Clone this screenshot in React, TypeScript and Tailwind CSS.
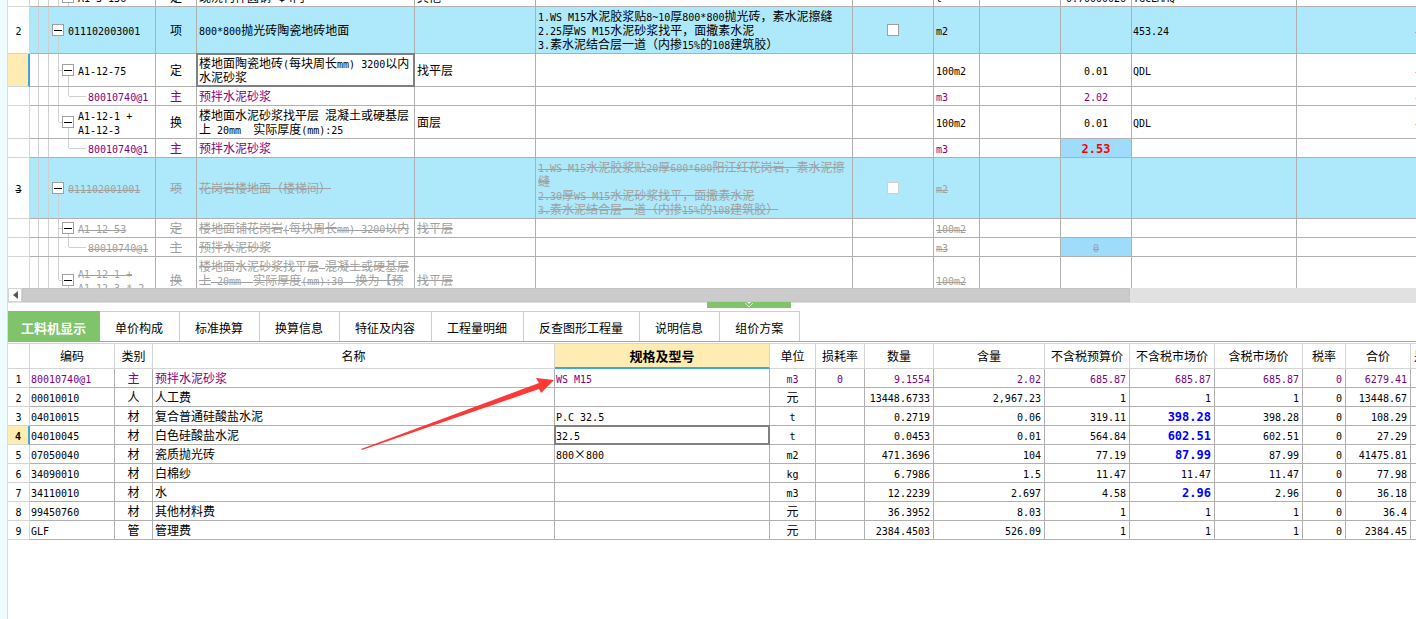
import { useState } from "react";
import type { ReactNode } from "react";
import clsx from "clsx";

type Kind = "item" | "norm" | "main";

interface BillRow {
  no?: string;
  level: 1 | 2 | 3;
  code: string;
  type: string;
  name: string;
  spec?: string;
  feature?: string;
  unit: string;
  content?: string;
  expr?: string;
  kind: Kind;
  height: string;
  last?: boolean;
  deleted?: boolean;
  changed?: boolean;
  selected?: boolean;
  check?: boolean;
  tail?: boolean;
}

const BILL: BillRow[] = [
  { level: 2, code: "A1-3-136", type: "定", name: "现浇构件圆钢 Φ4内", spec: "其他", unit: "t", content: "0.70000026", expr: "YGCLMMQ", kind: "norm", height: "h-[19px]" },
  { no: "2", level: 1, code: "011102003001", type: "项", name: "800*800抛光砖陶瓷地砖地面", feature: "1.WS M15水泥胶浆贴8~10厚800*800抛光砖，素水泥擦缝\n2.25厚WS M15水泥砂浆找平，面撒素水泥\n3.素水泥结合层一道（内掺15%的108建筑胶）", unit: "m2", expr: "453.24", kind: "item", height: "h-[47px]", check: true, tail: true },
  { level: 2, code: "A1-12-75", type: "定", name: "楼地面陶瓷地砖(每块周长mm) 3200以内\n水泥砂浆", spec: "找平层", unit: "100m2", content: "0.01", expr: "QDL", kind: "norm", height: "h-[33px]", selected: true, tail: true },
  { level: 3, code: "80010740@1", type: "主", name: "预拌水泥砂浆", unit: "m3", content: "2.02", kind: "main", height: "h-[19px]", tail: true },
  { level: 2, code: "A1-12-1 +\nA1-12-3", type: "换", name: "楼地面水泥砂浆找平层 混凝土或硬基层\n上 20mm  实际厚度(mm):25", spec: "面层", unit: "100m2", content: "0.01", expr: "QDL", kind: "norm", height: "h-[33px]", last: true, tail: true },
  { level: 3, code: "80010740@1", type: "主", name: "预拌水泥砂浆", unit: "m3", content: "2.53", kind: "main", height: "h-[19px]", last: true, changed: true },
  { no: "3", level: 1, code: "011102001001", type: "项", name: "花岗岩楼地面（楼梯间）", feature: "1.WS M15水泥胶浆贴20厚600*600阳江红花岗岩，素水泥擦\n缝\n2.30厚WS M15水泥砂浆找平，面撒素水泥\n3.素水泥结合层一道（内掺15%的108建筑胶）", unit: "m2", kind: "item", height: "h-[61px]", deleted: true, check: true },
  { level: 2, code: "A1-12-53", type: "定", name: "楼地面铺花岗岩(每块周长mm) 3200以内", spec: "找平层", unit: "100m2", kind: "norm", height: "h-[19px]", deleted: true },
  { level: 3, code: "80010740@1", type: "主", name: "预拌水泥砂浆", unit: "m3", content: "0", kind: "main", height: "h-[19px]", deleted: true, changed: true },
  { level: 2, code: "A1-12-1 +\nA1-12-3 * 2", type: "换", name: "楼地面水泥砂浆找平层 混凝土或硬基层\n上 20mm  实际厚度(mm):30  换为【预\n拌水泥砂浆】", spec: "找平层", unit: "100m2", kind: "norm", height: "h-[47px]", last: true, deleted: true },
];

const TABS = ["工料机显示", "单价构成", "标准换算", "换算信息", "特征及内容", "工程量明细", "反查图形工程量", "说明信息", "组价方案"];

const HEADS = ["", "编码", "类别", "名称", "规格及型号", "单位", "损耗率", "数量", "含量", "不含税预算价", "不含税市场价", "含税市场价", "税率", "合价", "是"];

// code, type, name, spec, unit, loss, qty, content, budget, market, taxed market, rate, total
const MATERIALS = [
  ["80010740@1", "主", "预拌水泥砂浆", "WS M15", "m3", "0", "9.1554", "2.02", "685.87", "685.87", "685.87", "0", "6279.41"],
  ["00010010", "人", "人工费", "", "元", "", "13448.6733", "2,967.23", "1", "1", "1", "0", "13448.67"],
  ["04010015", "材", "复合普通硅酸盐水泥", "P.C 32.5", "t", "", "0.2719", "0.06", "319.11", "398.28", "398.28", "0", "108.29"],
  ["04010045", "材", "白色硅酸盐水泥", "32.5", "t", "", "0.0453", "0.01", "564.84", "602.51", "602.51", "0", "27.29"],
  ["07050040", "材", "瓷质抛光砖", "800×800", "m2", "", "471.3696", "104", "77.19", "87.99", "87.99", "0", "41475.81"],
  ["34090010", "材", "白棉纱", "", "kg", "", "6.7986", "1.5", "11.47", "11.47", "11.47", "0", "77.98"],
  ["34110010", "材", "水", "", "m3", "", "12.2239", "2.697", "4.58", "2.96", "2.96", "0", "36.18"],
  ["99450760", "材", "其他材料费", "", "元", "", "36.3952", "8.03", "1", "1", "1", "0", "36.4"],
  ["GLF", "管", "管理费", "", "元", "", "2384.4503", "526.09", "1", "1", "1", "0", "2384.45"],
];

const CURRENT = 3;

// Latin runs are set in a smaller monospace so that two of them fill one Chinese character
function Txt({ children, struck, bold }: { children?: string; struck?: boolean; bold?: boolean }) {
  if (!children) return null;
  return (
    <span className={clsx("whitespace-pre", bold && "font-bold")}>
      {children.split(/([\x20-\x7e]+)/).map((part, i) => (
        <span
          key={i}
          className={clsx(
            struck && "line-through",
            i % 2 === 1 && "font-['DejaVu_Sans_Mono',monospace] leading-none",
            i % 2 === 1 && (bold && children.length > 1 ? "text-[12px]" : "text-[10px]")
          )}
        >
          {part}
        </span>
      ))}
    </span>
  );
}

function Toggle({ label }: { label: string }) {
  return (
    <div className="flex w-3 flex-col items-center">
      <div className="flex-1" />
      <button type="button" aria-label={label} className="flex h-3 w-3 shrink-0 items-center justify-center border border-[#a0a0a0] bg-white">
        <span className="h-px w-2 bg-black" />
      </button>
      <div className="ml-px w-px flex-1 bg-[#d0d0d0]" />
    </div>
  );
}

// Vertical guide, 10px wide with its line on the right edge
function Guide({ half, blank }: { half?: boolean; blank?: boolean }) {
  return (
    <div className="flex w-[10px] shrink-0 flex-col items-end">
      <div className={clsx("w-px flex-1", !blank && "bg-[#d0d0d0]")} />
      <div className={clsx("w-px flex-1", !blank && !half && "bg-[#d0d0d0]")} />
    </div>
  );
}

function Tree({ row }: { row: BillRow }) {
  return (
    <div className="-ml-px flex h-full items-stretch">
      <Guide />
      <Guide />
      {row.level > 1 && <Guide half={row.level === 2 && row.last} blank={row.level === 3 && row.last} />}
      {row.level === 3 && <Guide half />}
      <span className={clsx("h-px shrink-0 self-center bg-[#d0d0d0]", row.level === 3 ? "w-[17px]" : "w-[3px]")} />
      {row.level < 3 && <Toggle label={"折叠 " + row.code} />}
      <span className={clsx("self-center", row.level === 3 ? "pl-0.5" : "pl-1")}>
        <Txt struck={row.deleted}>{row.code}</Txt>
      </span>
    </div>
  );
}

function Cell({ children, className }: { children?: ReactNode; className?: string }) {
  return <td className={clsx("overflow-hidden border-r border-b border-[#b0b0b0] p-0 leading-[14px]", className)}>{children}</td>;
}

function BillLine({ row }: { row: BillRow }) {
  const s = row.deleted;
  return (
    <tr className={clsx(row.kind === "main" && !s && "text-[#800080]", s && "text-[#a0a0a0]", row.kind === "item" && "bg-[#ade9fb]")}>
      <td
        className={clsx(
          "border-b border-b-[#d5d5d5] p-0 text-center leading-[14px] text-black",
          row.height,
          row.selected ? "border-r-2 border-r-[#3fa7d3] bg-[#ffecb3]" : "border-r border-r-[#d5d5d5] bg-white"
        )}
      >
        <Txt struck={s}>{row.no}</Txt>
      </td>
      <Cell className={row.height}>
        <Tree row={row} />
      </Cell>
      <Cell className="text-center"><Txt struck={s}>{row.type}</Txt></Cell>
      <td className="relative border-r border-b border-[#b0b0b0] p-0 pl-0.5 leading-[14px]">
        <Txt struck={s}>{row.name}</Txt>
        {row.selected && <span className="absolute -top-px -right-px -bottom-px -left-px border-2 border-[#808080]" />}
      </td>
      <Cell className="pl-0.5"><Txt struck={s}>{row.spec}</Txt></Cell>
      <Cell className="pl-0.5"><Txt struck={s}>{row.feature}</Txt></Cell>
      <Cell>
        {row.check && (
          <input
            type="checkbox"
            aria-label={"选择 " + row.code}
            disabled={s}
            className={clsx("mx-auto block h-3 w-3 appearance-none border bg-white", s ? "border-[#d0d0d0]" : "border-[#a0a0a0]")}
          />
        )}
      </Cell>
      <Cell className="pl-0.5"><Txt struck={s}>{row.unit}</Txt></Cell>
      <Cell />
      <Cell className={clsx("text-center", row.changed && "bg-[#9fdcfb]", row.changed && !s && "text-[#ff0000]")}>
        <Txt struck={s} bold={row.changed && !s}>{row.content}</Txt>
      </Cell>
      <Cell className="pl-px"><Txt>{row.expr}</Txt></Cell>
      <td className="border-b border-[#b0b0b0] p-0 leading-[14px]">
        {row.tail && <div className="-mr-1 text-right"><Txt>-</Txt></div>}
      </td>
    </tr>
  );
}

function BillTable() {
  return (
    <div className="h-[288px] overflow-hidden">
      <table className="-mt-3 w-full table-fixed border-separate border-spacing-0">
        <colgroup>
          <col className="w-[22px]" />
          <col className="w-[126px]" />
          <col className="w-[41px]" />
          <col className="w-[218px]" />
          <col className="w-[121px]" />
          <col className="w-[317px]" />
          <col className="w-[81px]" />
          <col className="w-[46px]" />
          <col className="w-[81px]" />
          <col className="w-[71px]" />
          <col className="w-[165px]" />
          <col />
        </colgroup>
        <tbody>
          {BILL.map((row, i) => (
            <BillLine key={i} row={row} />
          ))}
        </tbody>
      </table>
    </div>
  );
}

function ScrollBar() {
  return (
    <div className="flex h-[15px] bg-[#e1e1e1]">
      <button type="button" aria-label="向左滚动" className="flex h-[14px] w-[14px] shrink-0 items-center justify-center border border-[#d5d5d5] bg-white">
        <svg width="5" height="8" viewBox="0 0 5 8">
          <path d="M5 0v8L0 4z" fill="#555560" />
        </svg>
      </button>
      <div className="h-[14px] flex-[31] border border-[#c4c4c4] bg-[#cbcbcb]" />
      <div className="flex-[8]" />
    </div>
  );
}

// index into MATERIALS rows
function align(col: number) {
  if (col === 1 || col === 4 || col === 5) return "text-center";
  if (col > 5) return "pr-[3px] text-right";
  return col === 2 ? "pl-0.5" : "pl-px";
}

function MaterialTable() {
  return (
    <table className="w-full table-fixed border-separate border-spacing-0 border-t border-[#d5d5d5]">
      <colgroup>
        <col className="w-[22px]" />
        <col className="w-[85px]" />
        <col className="w-[38px]" />
        <col />
        <col className="w-[215px]" />
        <col className="w-[46px]" />
        <col className="w-[49px]" />
        <col className="w-[69px]" />
        <col className="w-[111px]" />
        <col className="w-[85px]" />
        <col className="w-[85px]" />
        <col className="w-[88px]" />
        <col className="w-[43px]" />
        <col className="w-[65px]" />
        <col className="w-[5px]" />
      </colgroup>
      <thead>
        <tr>
          {HEADS.map((head, i) => (
            <th
              key={i}
              scope="col"
              className={clsx(
                "h-[25px] overflow-hidden border-r-[#d5d5d5] p-0 leading-[14px] whitespace-nowrap",
                i === 4 ? "border-b-2 border-b-[#3fa7d3] bg-[#ffecb3] text-[13px] font-bold" : "border-b border-b-[#d5d5d5] font-normal",
                i === HEADS.length - 1 ? "pl-[3px] text-left" : "border-r"
              )}
            >
              {head}
            </th>
          ))}
        </tr>
      </thead>
      <tbody>
        {MATERIALS.map((row, r) => (
          <tr key={row[0]} className={clsx(r === 0 && "text-[#800080]")}>
            <td
              className={clsx(
                "h-[19px] border-b border-b-[#d5d5d5] p-0 text-center leading-[14px] text-black",
                r === CURRENT ? "border-r-2 border-r-[#3fa7d3] bg-[#ffecb3]" : "border-r border-r-[#d5d5d5]"
              )}
            >
              <Txt bold={r === CURRENT}>{String(r + 1)}</Txt>
            </td>
            {row.map((value, c) => {
              // a market price that differs from the budget price was edited by hand
              const edited = c === 9 && value !== row[8];
              return (
                <td
                  key={c}
                  className={clsx("relative border-r border-b border-[#b0b0b0] p-0 leading-[14px]", align(c), edited && "text-[#0000ff]")}
                >
                  <Txt bold={edited}>{value}</Txt>
                  {r === CURRENT && c === 3 && <span className="absolute -top-px -right-px -bottom-px -left-px border-2 border-[#808080]" />}
                </td>
              );
            })}
            <td className="border-b border-[#b0b0b0] p-0" />
          </tr>
        ))}
      </tbody>
    </table>
  );
}

export default function App() {
  const [tab, setTab] = useState(0);

  return (
    <div className="flex min-h-screen bg-white font-['Noto_Sans_CJK_SC',sans-serif] text-[12px] text-black">
      <div className="w-2 shrink-0 border-r border-[#dcdcdc] bg-[#effcff]" />
      <main className="min-w-0 flex-1 overflow-hidden">
        <BillTable />
        <div className="relative pb-2">
          <ScrollBar />
          <button type="button" aria-label="收起" className="absolute top-[14px] left-1/2 flex h-1.5 w-[84px] -translate-x-[5px] justify-center bg-[#7fc36b]">
            <svg width="10" height="6" viewBox="0 0 10 6" fill="none" stroke="#fff">
              <path d="M3 0h4L5 2z" fill="#fff" stroke="none" />
              <path d="M1 1L5 5L9 1" strokeOpacity="0.7" />
            </svg>
          </button>
        </div>

        <div role="tablist" className="flex border-b border-b-[#7fc36b]">
          {TABS.map((label, i) => (
            <button
              key={label}
              type="button"
              role="tab"
              aria-selected={tab === i}
              onClick={() => setTab(i)}
              className={clsx(
                "h-[30px] border-t pt-0.5 leading-[14px] whitespace-nowrap",
                tab === i
                  ? "border-t-[#7fc36b] bg-[#7fc36b] pr-[14px] pl-[13px] text-[13px] font-bold text-white"
                  : "border-r border-t-[#b5e3a3] border-r-[#b5e3a3] pr-4 pl-[15px]"
              )}
            >
              {label}
            </button>
          ))}
        </div>

        <div className="relative pt-px">
          <MaterialTable />
          <svg className="pointer-events-none absolute top-9 right-[860px]" width="196" height="74" viewBox="0 0 196 74">
            <path d="M1 71L179 5L176 0L194 2L181 15L179 11L2 72z" fill="#fb3a38" />
          </svg>
        </div>
      </main>
    </div>
  );
}
